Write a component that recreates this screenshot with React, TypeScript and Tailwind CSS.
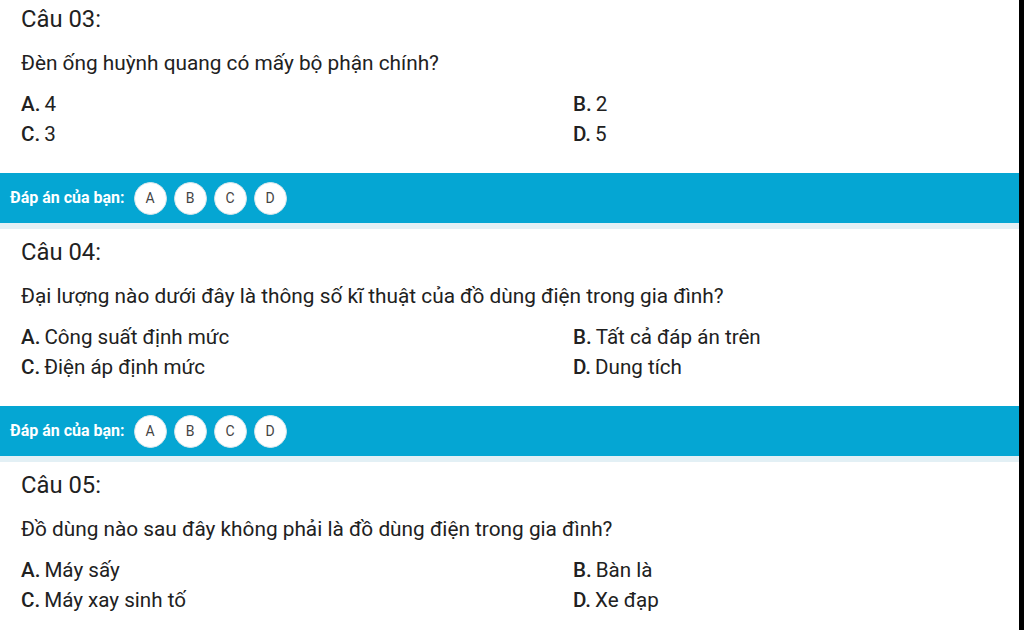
const questions = [
  {
    no: "03",
    text: "Đèn ống huỳnh quang có mấy bộ phận chính?",
    options: ["4", "2", "3", "5"],
  },
  {
    no: "04",
    text: "Đại lượng nào dưới đây là thông số kĩ thuật của đồ dùng điện trong gia đình?",
    options: ["Công suất định mức", "Tất cả đáp án trên", "Điện áp định mức", "Dung tích"],
  },
  {
    no: "05",
    text: "Đồ dùng nào sau đây không phải là đồ dùng điện trong gia đình?",
    options: ["Máy sấy", "Bàn là", "Máy xay sinh tố", "Xe đạp"],
  },
];

const letters = ["A", "B", "C", "D"];

function AnswerBar() {
  return (
    <div>
      <div className="h-[50px] bg-[#05a6d3] flex items-center pl-[10px] gap-[9px]">
        <span className="text-white font-bold text-[16px]">Đáp án của bạn:</span>
        <div className="flex gap-[7px]">
          {letters.map((l) => (
            <div
              key={l}
              className="w-[33px] h-[33px] rounded-full bg-white border border-[#d9e6ea] flex items-center justify-center text-[14px] text-[#444]"
            >
              {l}
            </div>
          ))}
        </div>
      </div>
      <div className="h-[6px] bg-[#e3f0f5]" />
    </div>
  );
}

export default function App() {
  return (
    <div
      className="w-[1024px] h-[630px] overflow-hidden flex bg-white text-[#212121]"
      style={{ fontFamily: "Roboto, 'Noto Sans', sans-serif" }}
    >
      <div className="flex-1 -mt-[4px]">
        {questions.map((q, i) => (
          <div key={q.no}>
            <div className="px-[21px] pt-[8px] pb-[24px]">
              <div className="h-[30px] leading-[30px] text-[23.8px]">Câu {q.no}:</div>
              <div className="mt-[14px] h-[30px] leading-[30px] text-[20.8px]">{q.text}</div>
              <div className="mt-[11px] grid grid-cols-[552px_1fr]">
                {q.options.map((o, j) => (
                  <div key={j} className="h-[30px] leading-[30px] text-[20.6px]">
                    <span className="font-medium mr-[4px]">{letters[j]}.</span>
                    {o}
                  </div>
                ))}
              </div>
            </div>
            {i < questions.length - 1 && <AnswerBar />}
          </div>
        ))}
      </div>
      <div className="w-[5px] bg-black" />
    </div>
  );
}
